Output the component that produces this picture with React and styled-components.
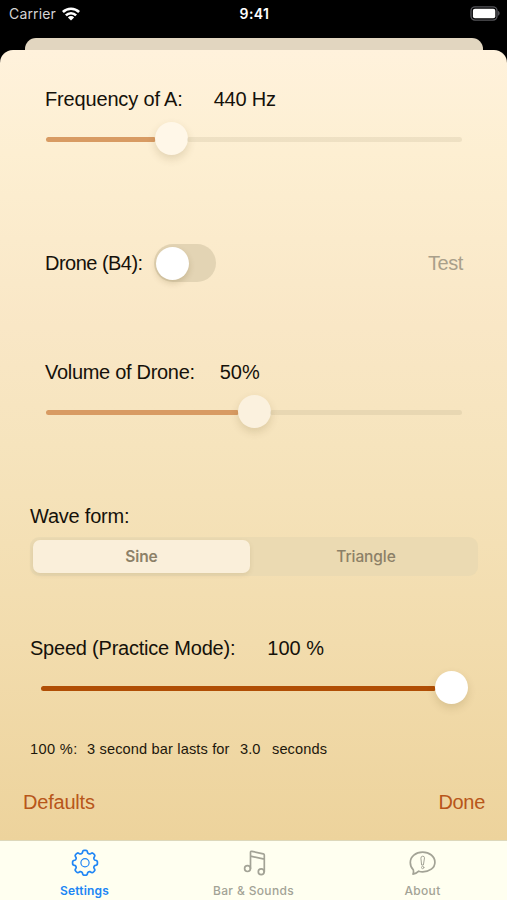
import React, { useState } from "react";
import styled, { createGlobalStyle } from "styled-components";

const GlobalStyle = createGlobalStyle`
    body {
        margin: 0;
        background: #000;
    }

    * {
        box-sizing: border-box;
    }
`

const Screen = styled.div`
    display: flex;
    flex-direction: column;
    width: 507px;
    height: 900px;
    overflow: hidden;
    background: #000;
    font-family: "Liberation Sans", Arial, sans-serif;
`

const StatusBar = styled.div`
    display: grid;
    grid-template-columns: 1fr auto 1fr;
    align-items: center;
    height: 27px;
    margin-bottom: 11px;
    padding: 0 7px 0 9px;
    color: #fff;
    font-family: Inter, sans-serif;
`

const Carrier = styled.div`
    display: flex;
    align-items: center;
    gap: 6px;
    color: #d4d4d4;
    font-size: 14px;
    letter-spacing: 0.15px;
`

const Clock = styled.div`
    font-size: 14px;
    font-weight: 600;
    letter-spacing: 0.4px;
`

const BatteryIcon = styled.svg`
    justify-self: end;
`

const BackCard = styled.div`
    flex: none;
    height: 12px;
    margin: 0 24px 0 25px;
    border-radius: 11px 11px 0 0;
    background: #e2d6c0;
`

const Sheet = styled.div`
    display: flex;
    flex-direction: column;
    flex: none;
    height: 790px;
    padding-top: 34px;
    border-radius: 13px 13px 0 0;
    background: linear-gradient(#fff2dc, #fdefd2 13%, #f9e7c6 35%, #f6e4bd 50%, #f2dcad 75%, #edd39c);
`

const Section = styled.div`
    height: ${props => props.$height}px;
    padding: 0 ${props => props.$right}px 0 ${props => props.$left}px;
`

const Row = styled.div`
    display: flex;
    align-items: center;
    height: 30px;
    gap: ${props => props.$gap || 0}px;
`

const Label = styled.div`
    color: #15110a;
    font-size: 20px;
    line-height: 30px;
    white-space: nowrap;
    letter-spacing: ${props => props.$spacing || 0}px;
`

const SliderBox = styled.div`
    display: flex;
    align-items: center;
    height: 34px;
    margin-top: 7px;
    padding-left: ${props => props.$inset}px;
`

const Track = styled.div`
    height: 5px;
    margin-top: 3px;
    border-radius: 3px;
`

const FilledTrack = styled(Track)`
    background: ${props => props.$dim ? "#d89b63" : "#b04e05"};
`

const EmptyTrack = styled(Track)`
    flex: 1;
    background: rgba(120, 110, 70, 0.11);
`

const Thumb = styled.div`
    flex: none;
    width: 33px;
    height: 33px;
    border-radius: 50%;
    margin: 0 -1px;
    background: ${props => props.$color};
    box-shadow: 0 4px 9px rgba(90, 70, 20, 0.16);
`

const Toggle = styled.button`
    display: flex;
    align-items: center;
    justify-content: ${props => props.$on ? "flex-end" : "flex-start"};
    width: 62px;
    height: 38px;
    padding: 2px;
    border: 0;
    border-radius: 19px;
    background: #e3d4b4;
`

const ToggleKnob = styled.div`
    width: 33px;
    height: 33px;
    border-radius: 50%;
    background: #fff;
    box-shadow: 0 3px 6px rgba(90, 70, 20, 0.2);
`

const TextButton = styled.button`
    margin-left: ${props => props.$end ? "auto" : "0"};
    padding: 0;
    border: 0;
    background: none;
    color: ${props => props.$muted ? "#a99f8a" : "#b8561a"};
    font-family: inherit;
    font-size: 20px;
    letter-spacing: ${props => props.$spacing || 0}px;
`

const Segments = styled.div`
    display: grid;
    grid-template-columns: 217px 1fr;
    gap: 5px;
    height: 39px;
    margin-top: 6px;
    padding: 3px 1px 3px 3px;
    border-radius: 9px;
    background: #ebdab2;
`

const Segment = styled.button`
    padding: 0 0 1px;
    border: 0;
    border-radius: 7px;
    background: ${props => props.$active ? "#faefda" : "none"};
    box-shadow: ${props => props.$active ? "0 2px 5px rgba(90, 70, 20, 0.1)" : "none"};
    color: #8c8067;
    font-family: Inter, sans-serif;
    font-size: 15.5px;
    font-weight: ${props => props.$active ? 600 : 500};
    letter-spacing: -0.1px;
`

const Caption = styled.div`
    display: flex;
    height: 20px;
    margin-top: 35px;
    color: #1d170c;
    font-size: 14.6px;
    line-height: 20px;
    white-space: pre;
`

const CaptionPart = styled.span`
    width: ${props => props.$width}px;
    letter-spacing: ${props => props.$spacing || 0}px;
`

const TabBar = styled.div`
    display: grid;
    grid-template-columns: repeat(3, 1fr);
    flex: none;
    height: 60px;
    border-top: 1px solid #ddd8bb;
    background: #fffff0;
`

const Tab = styled.button`
    display: flex;
    flex-direction: column;
    align-items: center;
    padding: 7px 0 0;
    border: 0;
    background: none;
    color: ${props => props.$active ? "#2086f5" : "#a3a396"};
    font-family: Inter, sans-serif;
    font-size: 12px;
    font-weight: ${props => props.$active ? 600 : 500};
    line-height: 16px;
    letter-spacing: ${props => props.$active ? 0.2 : 0.35}px;
`

const TabIcon = styled.svg`
    display: block;
    width: 30px;
    height: 30px;
    margin-bottom: 5px;
    fill: none;
    stroke: currentColor;
    stroke-width: 1.7;
    stroke-linecap: round;
    stroke-linejoin: round;
`

// eight rounded teeth around the centre
const gearPath = () => {
    const points = [];
    for (let i = 0; i < 160; i++) {
        const angle = (i / 160) * Math.PI * 2;
        const r = 11.1 + 1.35 * Math.tanh(2.2 * Math.cos(angle * 8) + 0.4);
        points.push((15 + r * Math.sin(angle)).toFixed(2) + " " + (14.8 - r * Math.cos(angle)).toFixed(2));
    }
    return "M" + points.join("L") + "Z";
}

const GearIcon = () => (
    <TabIcon viewBox="0 0 30 30">
        <path d={gearPath()} />
        <circle cx="15" cy="14.8" r="4.1" strokeWidth="1.2" />
    </TabIcon>
)

const NotesIcon = () => (
    <TabIcon viewBox="0 0 30 30">
        <circle cx="8.5" cy="20.6" r="2.9" />
        <circle cx="22.2" cy="23.8" r="2.9" />
        <path d="M11.5 20.6V4.4Q11.5 3 12.9 3.3L24.3 5.8Q25.3 6.1 25.3 7V23.8M11.5 8.1L25.3 11.2" />
    </TabIcon>
)

const AboutIcon = () => (
    <TabIcon viewBox="0 0 30 30">
        <path d="M5.3 21.8C3.3 19.9 2.3 17.3 2.3 14.5C2.3 8.4 7.7 4.2 14.6 4.2S26.9 8.4 26.9 14.2S21.5 23.8 14.6 23.8C13.2 23.8 12 23.6 10.8 23.2C9.3 24.7 7.3 25.9 5 26.1C5.6 24.8 5.7 23.2 5.3 21.8Z" />
        <path d="M12.9 9.8Q12.9 8.2 14.7 8.2T16.5 9.8L15.4 17H14Z" strokeWidth="1" />
        <circle cx="14.7" cy="19.5" r="1.2" strokeWidth="0.9" />
    </TabIcon>
)

const WifiIcon = () => (
    <svg width="18" height="14" viewBox="0 0 18 14" fill="none" stroke="#fff" strokeWidth="2.6">
        <path d="M0.9 5A11.6 11.6 0 0 1 17.1 5" />
        <path d="M3.9 8.3A7.2 7.2 0 0 1 14.1 8.3" />
        <path d="M5.9 10.4A4.2 4.2 0 0 1 12.1 10.4L9 13.6Z" fill="#fff" stroke="none" />
    </svg>
)

const Battery = () => (
    <BatteryIcon width="30" height="15" viewBox="0 0 30 15">
        <rect x="1" y="0.9" width="26" height="13.2" rx="4" fill="none" stroke="#55555a" strokeWidth="1.4" />
        <rect x="2.9" y="2.7" width="22.4" height="9.6" rx="2" fill="#fff" />
        <path d="M28.2 5.1C30 5.8 30 9 28.2 9.7Z" fill="#66666b" />
    </BatteryIcon>
)

const Slider = ({ inset = 0, value, dim, thumb }) => (
    <SliderBox $inset={inset}>
        <FilledTrack $dim={dim} style={{ width: `calc((100% - 31px) * ${value})` }} />
        <Thumb $color={thumb} />
        <EmptyTrack />
    </SliderBox>
)

const TABS = [
    { name: "Settings", Icon: GearIcon },
    { name: "Bar & Sounds", Icon: NotesIcon },
    { name: "About", Icon: AboutIcon },
];

export default function App() {
    const [drone, setDrone] = useState(false);
    const [wave, setWave] = useState("Sine");
    const [tab, setTab] = useState("Settings");

    return (
        <Screen>
            <GlobalStyle />
            <StatusBar>
                <Carrier>Carrier <WifiIcon /></Carrier>
                <Clock>9:41</Clock>
                <Battery />
            </StatusBar>
            <BackCard />
            <Sheet>
                <Section $height={164} $left={45} $right={45}>
                    <Row $gap={31}>
                        <Label $spacing={-0.16}>Frequency of A:</Label>
                        <Label $spacing={-0.2}>440 Hz</Label>
                    </Row>
                    <Slider inset={1} value={0.287} dim thumb="#fff7e8" />
                </Section>
                <Section $height={109} $left={45} $right={44}>
                    <Row $gap={11}>
                        <Label $spacing={-0.52}>Drone (B4):</Label>
                        <Toggle $on={drone} onClick={() => setDrone(!drone)}><ToggleKnob /></Toggle>
                        <TextButton $muted $end $spacing={-0.4}>Test</TextButton>
                    </Row>
                </Section>
                <Section $height={144} $left={45} $right={45}>
                    <Row $gap={25}>
                        <Label $spacing={-0.3}>Volume of Drone:</Label>
                        <Label>50%</Label>
                    </Row>
                    <Slider inset={1} value={0.501} dim thumb="#fbf1de" />
                </Section>
                <Section $height={132} $left={30} $right={29}>
                    <Row>
                        <Label $spacing={-0.22}>Wave form:</Label>
                    </Row>
                    <Segments>
                        {
                            ["Sine", "Triangle"].map(name => (
                                <Segment key={name} $active={wave === name} onClick={() => setWave(name)}>{name}</Segment>
                            ))
                        }
                    </Segments>
                </Section>
                <Section $height={154} $left={30} $right={40}>
                    <Row $gap={32}>
                        <Label $spacing={-0.22}>Speed (Practice Mode):</Label>
                        <Label>100 %</Label>
                    </Row>
                    <Slider inset={11} value={1} thumb="#fff" />
                    <Caption>
                        <CaptionPart $width={57} $spacing={0.35}>100 %:</CaptionPart>
                        <CaptionPart $width={153} $spacing={0.14}>3 second bar lasts for</CaptionPart>
                        <CaptionPart $width={32} $spacing={0.1}>3.0</CaptionPart>
                        <CaptionPart $width={60} $spacing={0.1}>seconds</CaptionPart>
                    </Caption>
                </Section>
                <Section $height={30} $left={23} $right={22}>
                    <Row>
                        <TextButton $spacing={-0.2}>Defaults</TextButton>
                        <TextButton $end $spacing={-0.3}>Done</TextButton>
                    </Row>
                </Section>
            </Sheet>
            <TabBar>
                {
                    TABS.map(({ name, Icon }) => (
                        <Tab key={name} $active={tab === name} onClick={() => setTab(name)}>
                            <Icon />
                            {name}
                        </Tab>
                    ))
                }
            </TabBar>
        </Screen>
    );
}
